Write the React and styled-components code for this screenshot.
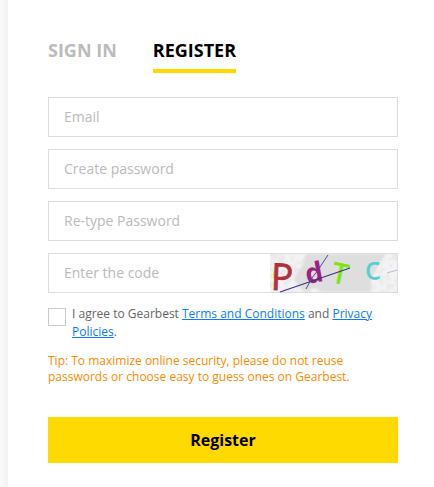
import React from 'react';
import styled, { createGlobalStyle } from 'styled-components';

const fields = [
    { name: 'email', type: 'email', label: 'Email' },
    { name: 'password', type: 'password', label: 'Create password' },
    { name: 'confirm', type: 'password', label: 'Re-type Password' },
];

function Captcha() {
    return (
        <CaptchaImage viewBox="0 0 127 38" role="img">
            <defs>
                <filter id="grain" x="0" y="0" width="100%" height="100%">
                    <feTurbulence type="fractalNoise" baseFrequency="0.14" numOctaves="3" seed="8" />
                    <feColorMatrix values="0 0 0 0 0.82  0 0 0 0 0.82  0 0 0 0 0.82  5 0 0 0 -2.3" />
                </filter>
                <filter id="soft">
                    <feGaussianBlur stdDeviation="1.2" />
                </filter>
            </defs>
            <rect width="127" height="38" fill="#f3f3f3" />
            <rect width="127" height="38" filter="url(#grain)" />
            <path
                d="M36 0H116L109 10 104 20 101 26V38H52L44 34 36 38 28 32 24 24 32 12Z"
                fill="#dedede"
                filter="url(#soft)"
            />
            <path d="M4 17v7" stroke="#eee84a" strokeWidth="2" />
            <text x="0.5" y="36" fontSize="37" fill="#b1303a" stroke="#b1303a" strokeWidth="0.8" transform="rotate(2 10 35)">P</text>
            <text x="37" y="28.5" fontSize="28" fontWeight="700" fill="#a01f80" transform="rotate(-10 45 29)">d</text>
            <text x="60.5" y="29.5" fontSize="28" fill="#7ce70c" stroke="#7ce70c" strokeWidth="1" transform="rotate(12 69 29)">T</text>
            <text x="96" y="25" fontSize="23" fill="#50d0d0" stroke="#50d0d0" strokeWidth="0.9" transform="rotate(-3 104 25)">C</text>
            <path d="M10 38 80 14" stroke="#393380" strokeWidth="1.1" />
            <path d="M58 1 48 16 42 24 36 35" fill="none" stroke="#4450a0" strokeWidth="1" />
            <path d="M117 19 127 16" stroke="#c9a2dc" strokeWidth="0.9" />
        </CaptchaImage>
    );
}

export default function App() {
    return (
        <Page>
            <GlobalStyle />
            <Panel>
                <Tabs>
                    <Tab>SIGN IN</Tab>
                    <Tab $active>REGISTER</Tab>
                </Tabs>
                <Fields>
                    {fields.map((field) => (
                        <Field key={field.name}>
                            <Input type={field.type} name={field.name} placeholder={field.label} />
                        </Field>
                    ))}
                    <Field>
                        <Input type="text" name="code" placeholder="Enter the code" />
                        <Captcha />
                    </Field>
                </Fields>
                <Agreement>
                    <Checkbox type="checkbox" />
                    <AgreementText>
                        I agree to Gearbest <Link href="#terms">Terms and Conditions</Link> and{' '}
                        <Link href="#privacy">Privacy Policies</Link>.
                    </AgreementText>
                </Agreement>
                <Tip>
                    Tip: To maximize online security, please do not reuse passwords or choose easy to guess ones on Gearbest.
                </Tip>
                <RegisterButton type="button">Register</RegisterButton>
            </Panel>
        </Page>
    );
}

const GlobalStyle = createGlobalStyle`
    * {
        box-sizing: border-box;
    }
    body {
        margin: 0;
        background: #fff;
        font-family: 'Open Sans', sans-serif;
    }
    input, button {
        font-family: inherit;
    }
`;

const Page = styled.div`
    height: 487px;
    padding-left: 8px;
    background: linear-gradient(to right, #fafafa, #f2f2f2 8px);
    overflow: hidden;
`;

const Panel = styled.div`
    height: 100%;
    padding: 38px 36px 0 40px;
    background: #fff;
`;

const Tabs = styled.div`
    display: flex;
    gap: 36px;
    height: 35px;
`;

const Tab = styled.div`
    height: 35px;
    font-size: 18px;
    line-height: 25px;
    font-weight: 700;
    white-space: nowrap;
    color: ${(props) => (props.$active ? '#000' : '#bbb')};
    border-bottom: 4px solid ${(props) => (props.$active ? '#ffda00' : 'transparent')};
`;

const Fields = styled.div`
    display: flex;
    flex-direction: column;
    gap: 12px;
    margin-top: 24px;
`;

const Field = styled.div`
    display: flex;
    height: 40px;
    border: 1px solid #ddd;
`;

const Input = styled.input`
    flex: 1;
    min-width: 0;
    padding: 0 15px 2px;
    border: 0;
    outline: none;
    background: transparent;
    font-size: 14px;
    color: #333;
    &::placeholder {
        color: #bbb;
        opacity: 1;
    }
`;

const CaptchaImage = styled.svg`
    flex: none;
    width: 127px;
    height: 38px;
    overflow: visible;
    font-family: 'Open Sans', sans-serif;
`;

const Agreement = styled.div`
    display: flex;
    gap: 6px;
    margin-top: 12px;
`;

const Checkbox = styled.input`
    appearance: none;
    flex: none;
    width: 18px;
    height: 18px;
    margin: 3px 0 0;
    border: 1px solid #ccc;
    background: #fff;
`;

const AgreementText = styled.p`
    margin: 0;
    font-size: 12px;
    line-height: 18px;
    color: #666;
`;

const Link = styled.a`
    color: #0a7cff;
    text-decoration: underline;
`;

const Tip = styled.p`
    margin: 12px 0 0;
    font-size: 12px;
    line-height: 16px;
    color: #ff8a00;
`;

const RegisterButton = styled.button`
    display: block;
    width: 100%;
    height: 46px;
    margin-top: 32px;
    padding: 0;
    border: 0;
    background: #ffda00;
    color: #000;
    font-size: 16px;
    font-weight: 700;
`;
